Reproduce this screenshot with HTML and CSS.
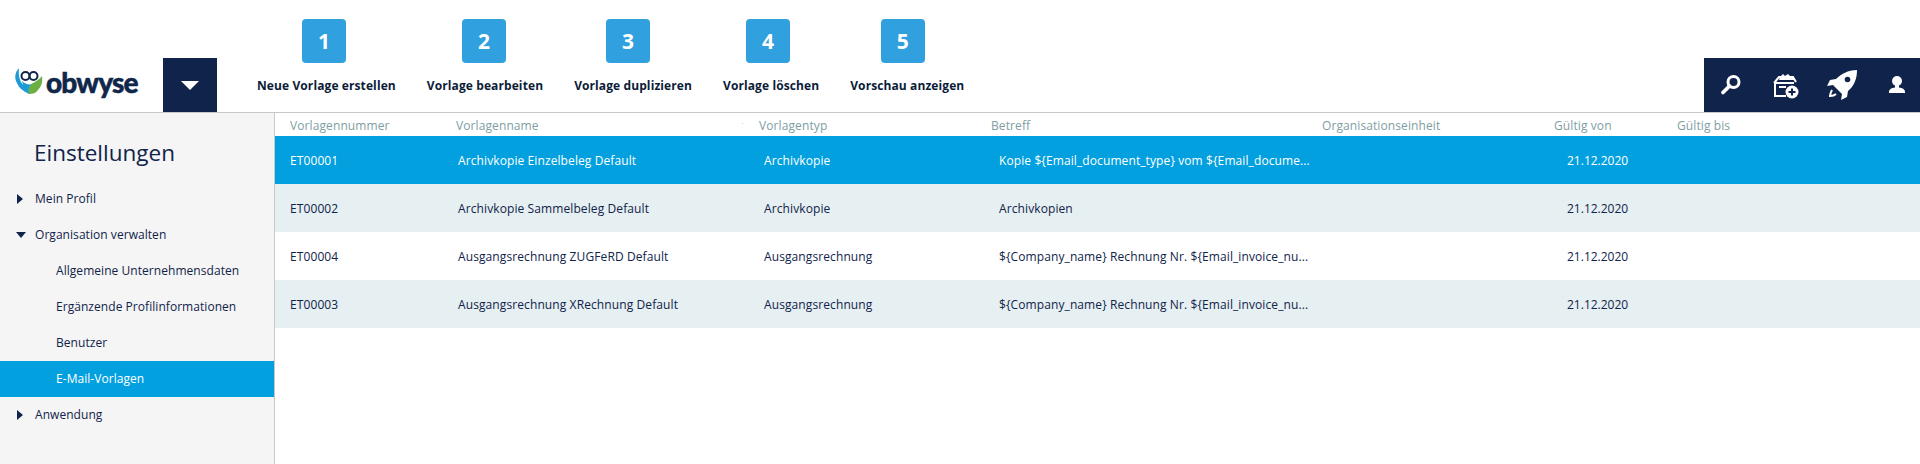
FILE: index.html
```html
<!DOCTYPE html>
<html lang="de">
<head>
<meta charset="utf-8">
<title>Einstellungen</title>
<link rel="stylesheet" href="styles.css">
</head>
<body>
<header class="topbar">
  <div class="logo">
    <svg class="logo-mark" viewBox="0 0 28 26" width="28" height="26">
      <path d="M4 0C0 4-1 10 2 15c2 5 6 8 12 11-1-3-1-6-4-8C5 15 3 8 4 0z" fill="#1e9ad6"/>
      <path d="M14 26c-2-5 0-9 4-11 3-2 6-3 9-7 1 6-1 11-4 14-2 3-5 4-9 4z" fill="#6cb043"/>
      <path d="M7 13c3 3 7 4 10 3-3 2-4 5-3 10-3-3-6-8-7-13z" fill="#1e9ad6"/>
      <circle cx="10.500" cy="8" r="4" fill="none" stroke="#10274a" stroke-width="2"/>
      <circle cx="18.500" cy="8" r="4" fill="none" stroke="#10274a" stroke-width="2"/>
    </svg>
    <span class="logo-text">obwyse</span>
  </div>
  <button class="menu-toggle" type="button" aria-label="Menü"><span class="caret-down-lg"></span></button>
  <nav class="tools">
    <div class="tool t1"><span class="num">1</span><span class="tool-label">Neue Vorlage erstellen</span></div>
    <div class="tool t2"><span class="num">2</span><span class="tool-label">Vorlage bearbeiten</span></div>
    <div class="tool t3"><span class="num">3</span><span class="tool-label">Vorlage duplizieren</span></div>
    <div class="tool t4"><span class="num">4</span><span class="tool-label">Vorlage löschen</span></div>
    <div class="tool t5"><span class="num">5</span><span class="tool-label">Vorschau anzeigen</span></div>
  </nav>
  <div class="actions">
    <svg class="act" viewBox="0 0 24 24" width="24" height="24"><circle cx="14.500" cy="9" r="5.500" fill="none" stroke="#fff" stroke-width="3"/><path d="M10.500 13 4 19.500" stroke="#fff" stroke-width="3.800" stroke-linecap="round"/></svg>
    <svg class="act" viewBox="0 0 28 28" width="28" height="28"><path d="M3 12 8 6h14l3 5" fill="none" stroke="#fff" stroke-width="2"/><path d="M9 6l3-3 2 2 3-2 2 2 3 1 2 3H8z" fill="#fff"/><path d="M3 12h20M4 12v13h11M8 16h7" fill="none" stroke="#fff" stroke-width="2"/><circle cx="21" cy="21" r="6.500" fill="#fff"/><path d="M21 17.500v7M17.500 21h7" stroke="#10234a" stroke-width="2"/></svg>
    <svg class="act" viewBox="0 0 30 30" width="30" height="30"><path d="M30 0C21 0 14 4 9 9L3 10 0 16l6-1 9 9-1 6 6-3 1-6c6-5 9-12 9-21z" fill="#fff"/><circle cx="20.500" cy="9.500" r="2.800" fill="#10234a"/><path d="M5 20c-1 2-2 4-2 6 2 0 4 0 6-2" fill="none" stroke="#fff" stroke-width="2"/></svg>
    <svg class="act" viewBox="0 0 24 24" width="24" height="24"><circle cx="12" cy="8" r="5" fill="#fff"/><path d="M10 12h4v2.500c3 .5 6 1.500 6 4.500v1H4v-1c0-3 3-4 6-4.500z" fill="#fff"/></svg>
  </div>
</header>
<div class="main">
  <aside class="sidebar">
    <h1 class="side-title">Einstellungen</h1>
    <ul class="side-list">
      <li class="side-item"><span class="caret-right"></span>Mein Profil</li>
      <li class="side-item"><span class="caret-down"></span>Organisation verwalten</li>
      <li class="side-item sub">Allgemeine Unternehmensdaten</li>
      <li class="side-item sub">Ergänzende Profilinformationen</li>
      <li class="side-item sub">Benutzer</li>
      <li class="side-item sub active">E-Mail-Vorlagen</li>
      <li class="side-item"><span class="caret-right"></span>Anwendung</li>
    </ul>
  </aside>
  <section class="table">
    <div class="row head">
      <span>Vorlagennummer</span><span class="resize">Vorlagenname</span><span>Vorlagentyp</span><span>Betreff</span><span>Organisationseinheit</span><span>Gültig von</span><span>Gültig bis</span>
    </div>
    <div class="row selected">
      <span>ET00001</span><span class="c2">Archivkopie Einzelbeleg Default</span><span class="c3">Archivkopie</span><span class="c4">Kopie ${Email_document_type} vom ${Email_docume...</span><span></span><span class="c6">21.12.2020</span><span></span>
    </div>
    <div class="row alt">
      <span>ET00002</span><span class="c2">Archivkopie Sammelbeleg Default</span><span class="c3">Archivkopie</span><span class="c4">Archivkopien</span><span></span><span class="c6">21.12.2020</span><span></span>
    </div>
    <div class="row">
      <span>ET00004</span><span class="c2">Ausgangsrechnung ZUGFeRD Default</span><span class="c3">Ausgangsrechnung</span><span class="c4">${Company_name} Rechnung Nr. ${Email_invoice_nu...</span><span></span><span class="c6">21.12.2020</span><span></span>
    </div>
    <div class="row alt">
      <span>ET00003</span><span class="c2">Ausgangsrechnung XRechnung Default</span><span class="c3">Ausgangsrechnung</span><span class="c4">${Company_name} Rechnung Nr. ${Email_invoice_nu...</span><span></span><span class="c6">21.12.2020</span><span></span>
    </div>
  </section>
</div>
</body>
</html>
```
FILE: styles.css
```css
* { box-sizing: border-box; }
html, body { margin: 0; height: 100%; }
body {
  font-family: "Open Sans", "Noto Sans", sans-serif;
  font-size: 12px;
  color: #10234a;
  background: #fff;
  overflow: hidden;
}
.topbar {
  height: 113px;
  display: flex;
  align-items: flex-end;
  border-bottom: 1px solid #c8c8c8;
}
.logo {
  width: 163px;
  height: 58px;
  padding: 14px 0 0 15px;
  display: flex;
  align-items: flex-start;
  gap: 3px;
}
.logo-mark { flex: none; }
.logo-text {
  font-family: "Lato", sans-serif;
  font-weight: 900;
  font-size: 28px;
  line-height: 28px;
  letter-spacing: -0.8px;
  color: #10274a;
  -webkit-text-stroke: 0.5px #10274a;
}
.menu-toggle {
  width: 54px;
  height: 54px;
  margin: 0;
  padding: 0;
  border: 0;
  background: #10234a;
  display: flex;
  align-items: center;
  justify-content: center;
}
.caret-down-lg {
  width: 0; height: 0;
  border-left: 9px solid transparent;
  border-right: 9px solid transparent;
  border-top: 9px solid #fff;
}
.tools {
  flex: 1;
  display: flex;
  margin-left: 40px;
  gap: 31px;
  height: 112px;
  padding-top: 19px;
}
.tool {
  display: flex;
  flex-direction: column;
  align-items: center;
}
.num {
  width: 44px;
  height: 44px;
  border-radius: 4px;
  background: #30a0df;
  color: #fff;
  font-weight: 700;
  font-size: 21px;
  display: flex;
  align-items: center;
  justify-content: center;
}
.t1 .num { margin-right: 5px; }
.t2 .num { margin-right: 2px; }
.t3 .num { margin-right: 10px; }
.t4 .num { margin-right: 6px; }
.t5 .num { margin-right: 9px; }
.tool-label {
  margin-top: 14px;
  line-height: 18px;
  font-weight: 700;
  font-size: 12px;
  letter-spacing: 0.1px;
  white-space: nowrap;
  color: #0c1c38;
}
.actions {
  width: 216px;
  height: 54px;
  background: #10234a;
  display: flex;
  align-items: center;
  justify-content: space-between;
  padding: 0 11px 0 15px;
}
.act { flex: none; }
.main { display: flex; height: 351px; }
.sidebar {
  width: 275px;
  flex: none;
  background: #f5f5f5;
  border-right: 1px solid #c8c8c8;
}
.side-title {
  margin: 0;
  padding: 22px 0 0 34px;
  height: 68px;
  font-weight: 400;
  font-size: 22.500px;
  line-height: 36px;
}
.side-list { list-style: none; margin: 0; padding: 0; }
.side-item {
  height: 36px;
  line-height: 36px;
  padding-left: 35px;
  position: relative;
  white-space: nowrap;
  letter-spacing: 0.05px;
}
.sub { padding-left: 56px; }
.active { background: #02a0df; color: #fff; }
.caret-right {
  position: absolute;
  left: 17px; top: 13px;
  width: 0; height: 0;
  border-top: 5px solid transparent;
  border-bottom: 5px solid transparent;
  border-left: 6px solid #10234a;
}
.caret-down {
  position: absolute;
  left: 16px; top: 15px;
  width: 0; height: 0;
  border-left: 5px solid transparent;
  border-right: 5px solid transparent;
  border-top: 6px solid #10234a;
}
.table { flex: 1; min-width: 0; }
.row {
  display: grid;
  grid-template-columns: 166px 303px 232px 331px 232px 123px 1fr;
  height: 48px;
  align-items: center;
  letter-spacing: 0.1px;
}
.row > span { padding-left: 15px; white-space: nowrap; }
.row > .c2 { padding-left: 17px; }
.row > .c3 { padding-left: 20px; }
.row > .c4 { padding-left: 23px; }
.row > .c6 { padding-left: 28px; letter-spacing: 0; }
.head { height: 23px; padding-top: 2px; color: #7e9ea3; position: relative; }
.resize { position: relative; }
.resize::after {
  content: "";
  position: absolute;
  right: 1px; top: 6px;
  width: 1px; height: 1px;
  background: #c4d2d4;
}
.selected { background: #02a0df; color: #fff; }
.alt { background: #e6eff1; }
```
